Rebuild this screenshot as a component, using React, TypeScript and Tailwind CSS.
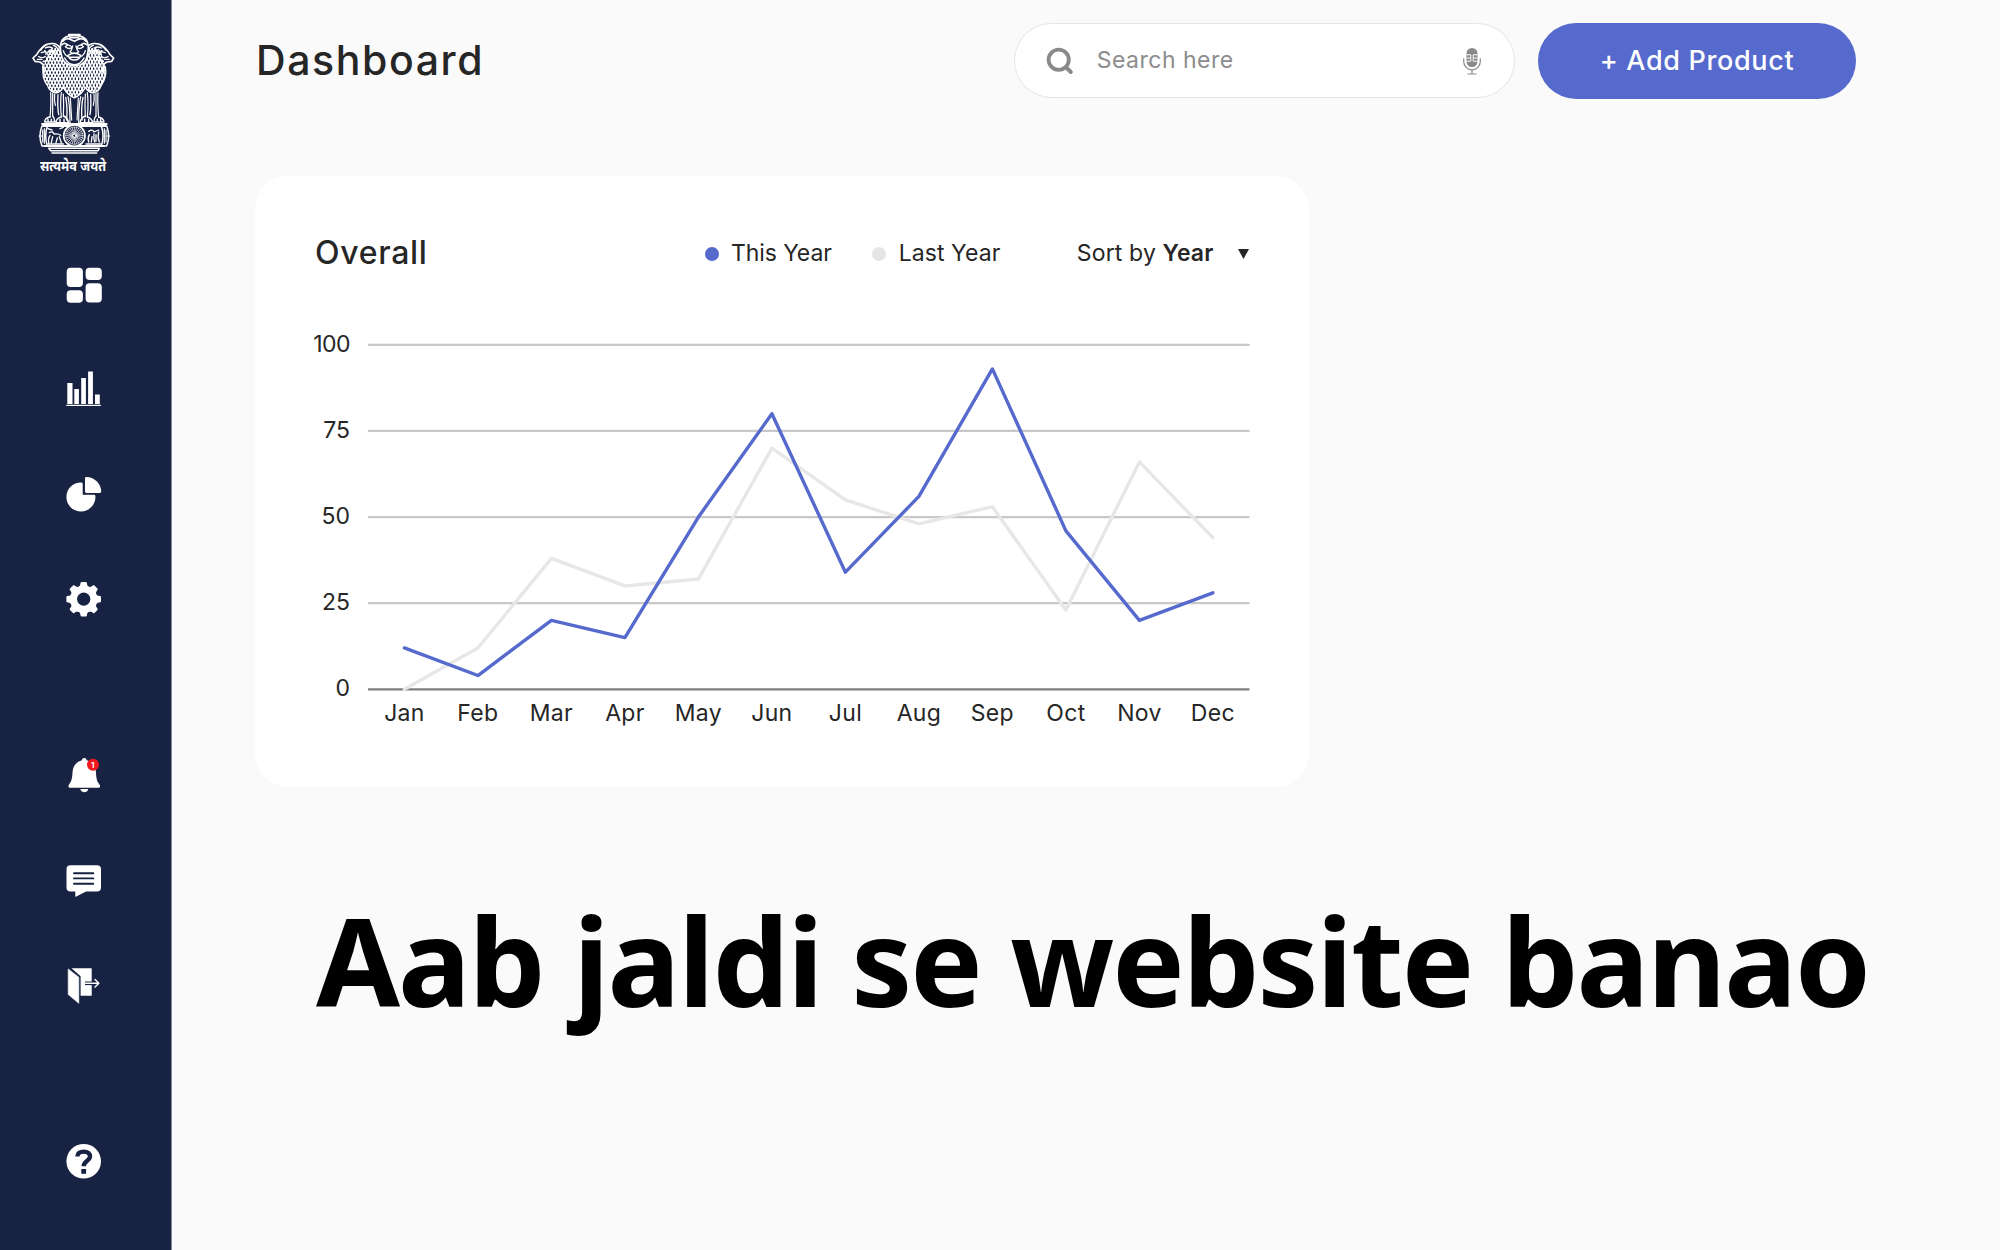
import React from "react";

const NAVY = "#182242";
const MONTHS = ["Jan", "Feb", "Mar", "Apr", "May", "Jun", "Jul", "Aug", "Sep", "Oct", "Nov", "Dec"];
const THIS_YEAR = [12, 4, 20, 15, 50, 80, 34, 56, 93, 46, 20, 28];
const LAST_YEAR = [0, 12, 38, 30, 32, 70, 55, 48, 53, 23, 66, 44];

/* ---------- Emblem ---------- */

function ManeScales() {
  const rows: React.ReactNode[] = [];
  for (let r = 0; r < 15; r++) {
    for (let c = 0; c < 20; c++) {
      const x = 66 + c * 10 + (r % 2) * 5;
      const y = 84 + r * 10;
      const lean = x < 130 ? -2 : x > 196 ? 2 : 0;
      rows.push(<path key={`${r}-${c}`} d={`M${x} ${y}q${1 + lean} 9 5 11q4 -3 5 -11`} />);
    }
  }
  return <g>{rows}</g>;
}

function SideLion() {
  return (
    <g>
      <path d="M120 84Q110 68 92 71Q76 72 66 84Q56 92 50 104L39 114L45 124L60 126L70 134Q66 146 74 156" strokeWidth="5" />
      <path d="M76 84Q86 78 98 84M64 98l12 -3M56 110q10 6 20 0M74 92q6 4 4 12M82 98q10 -8 18 2M84 112q10 -6 14 4M52 118h14M90 90q12 0 16 10M100 76q12 4 14 14" strokeWidth="4" />
      <path d="M62 90l6 -8 8 -6M70 124q10 2 12 -10" strokeWidth="5" />
    </g>
  );
}

function Emblem() {
  return (
    <svg width="90" height="125" viewBox="30 30 270 375" fill="none" stroke="#fff" strokeWidth="2.6" strokeLinecap="round" strokeLinejoin="round">
      <defs>
        <clipPath id="mane">
          <path d="M84 92Q100 76 124 90L132 128Q163 150 194 128L202 90Q226 76 242 92Q250 122 256 140Q262 170 244 196Q236 216 222 218Q206 220 196 202Q186 224 163 234Q140 224 130 202Q120 220 104 218Q90 216 82 196Q64 172 70 142Q78 122 84 92Z" />
        </clipPath>
      </defs>
      <g clipPath="url(#mane)" strokeWidth="4.200">
        <ManeScales />
      </g>
      <path d="M70 142Q64 172 82 196Q90 216 104 218Q120 220 130 202Q140 224 163 234Q186 224 196 202Q206 220 222 218Q236 216 244 196Q262 170 256 140" strokeWidth="4" />
      <SideLion />
      <g transform="matrix(-1 0 0 1 320 0)">
        <SideLion />
      </g>
      {/* centre lion */}
      <path d="M124 66Q118 84 124 104Q128 128 146 134Q164 140 182 134Q200 126 202 104Q208 84 202 66Q194 46 163 46Q132 46 124 66Z" fill={NAVY} strokeWidth="5" />
      <path d="M146 44h34M150 53h26M128 64q12 -12 22 -6l13 6l13 -6q12 -6 22 6M126 74q8 -8 16 0M184 74q8 -8 16 0" strokeWidth="5" />
      <path d="M136 80q10 -10 20 2q-8 8 -20 -2M170 82q10 -12 20 -2q-12 10 -20 2M158 78q-2 12 -8 18q13 8 26 0q-6 -6 -8 -18M130 92q4 14 14 18M196 92q-4 14 -14 18" strokeWidth="4" />
      <path d="M144 106q19 -12 38 0q-4 14 -19 14t-19 -14ZM150 112h26M134 114q10 20 29 20t29 -20" strokeWidth="4.500" />
      {/* legs */}
      <path d="M92 218Q94 250 90 292M98 220L98 288M124 218Q120 250 124 292M130 222Q132 256 130 290M144 230Q150 260 150 308M151 234L155 300M175 234L171 300M182 230Q176 260 176 308M196 222Q194 256 196 290M202 218Q206 250 202 292M228 220L228 288M234 218Q232 250 236 292M104 222Q102 240 106 256M222 222Q224 240 220 256" strokeWidth="3.600" />
      <path d="M137 232Q143 260 140 300M189 232Q183 260 186 300M114 224Q112 260 116 284M212 224Q214 260 210 284" strokeWidth="4" />
      {/* paws */}
      <path d="M90 290Q74 294 74 306H104Q104 294 98 288M124 290Q108 296 108 308H146Q142 294 132 288M196 288Q182 294 180 308H218Q216 296 202 290M228 288Q222 294 222 306H252Q250 294 236 292M84 298v8M94 298v8M120 298v8M132 298v8M194 298v8M206 298v8M232 298v8M242 298v8" strokeWidth="4.400" />
      {/* abacus */}
      <path d="M66 312H260M70 318H256M74 378H252" strokeWidth="5.500" strokeDasharray="5 2" />
      <path d="M66 318Q54 348 66 378H82Q72 348 82 318ZM260 318Q272 348 260 378H244Q254 348 244 318Z" strokeWidth="4.500" />
      <path d="M68 330v36M73 326v44M258 330v36M253 326v44M57 348h8M261 348h8" strokeWidth="3.500" />
      <circle cx="163" cy="347" r="32" fill={NAVY} strokeWidth="5" />
      <circle cx="163" cy="347" r="26" strokeWidth="1.5" />
      {Array.from({ length: 24 }, (_, i) => {
        const a = (i * Math.PI) / 12;
        return <path key={i} d={`M${163 + 6 * Math.cos(a)} ${347 + 6 * Math.sin(a)}L${163 + 26 * Math.cos(a)} ${347 + 26 * Math.sin(a)}`} strokeWidth="2.100" />;
      })}
      <circle cx="163" cy="347" r="5" strokeWidth="3" />
      <path d="M84 326l12 4M88 338q10 -6 14 4q14 -2 20 4M90 346q-6 8 -4 22M98 350l-4 18M118 350l6 18M112 354l-4 14M84 372h46M120 326l10 -4M206 334q12 -8 16 2l14 -6M208 344q-6 10 -2 22M222 342q-2 12 2 24M236 336q-4 16 2 30M198 372h44M216 350l-2 16M228 344v20" strokeWidth="4" />
      {/* base */}
      <path d="M86 385H238L234 392H92ZM96 399H230" strokeWidth="4.500" />
    </svg>
  );
}

/* ---------- Sidebar icons ---------- */

function Icon({ y, className, children }: { y: number; className: string; children: React.ReactNode }) {
  return (
    <svg className={className} width="38" height="38" viewBox={`65 ${y} 38 38`} fill="#fff">
      {children}
    </svg>
  );
}

function Sidebar() {
  return (
    <aside className="flex h-full w-[172px] shrink-0 flex-col border-r border-[#868b9b] bg-[#182242] pt-[30px]">
      <div className="ml-[30px] h-[125px]">
        <Emblem />
      </div>
      <div className="mt-px ml-[40px] h-[23px] w-[80px] origin-left scale-x-[0.87] font-['Noto_Sans_Devanagari','Noto_Sans','FreeSans',sans-serif] text-[14.5px] leading-[24px] font-bold whitespace-nowrap text-white">
        सत्यमेव जयते
      </div>
      <nav className="ml-[65px] flex flex-col">
        <Icon y={266} className="mt-[87px]">
          <rect x="66.7" y="267.7" width="16.2" height="19.2" rx="4" />
          <rect x="66.7" y="290.3" width="16.2" height="12.4" rx="4" />
          <rect x="85.6" y="267.7" width="16.2" height="12.4" rx="4" />
          <rect x="85.6" y="283.2" width="16.2" height="19.4" rx="4" />
        </Icon>
        <Icon y={370} className="mt-[66px]">
          <path d="M67.3 383h5.2v21h-5.200zM74.300 389h4.600v15h-4.600zM81.200 378h4.700v26h-4.700zM88.100 371.500h4.800v32.500h-4.800zM95 394.500h4.800v9.500h-4.800zM66.300 404.800h34.600v1.200h-34.600z" />
        </Icon>
        <Icon y={475} className="mt-[67px]">
          <path d="M81.3 482.5q1.4 0 1.4 1.4v10.9h11.3q1.4 0 1.4 1.4A14.5 14.5 0 1 1 81.3 482.5Z" />
          <path d="M86.3 477A15 15 0 0 1 101.2 491.600q0 1.400-1.400 1.400H86.400q-1.400 0-1.400-1.400V478.300q0-1.300 1.300-1.300Z" />
        </Icon>
        <Icon y={580} className="mt-[67px]">
          <circle cx="83.7" cy="599.2" r="13" />
          {[0, 45, 90, 135, 180, 225, 270, 315].map((a) => (
            <path key={a} transform={`rotate(${a} 83.7 599.2)`} stroke="#fff" strokeWidth="2" strokeLinejoin="round" d="M78.4 588.2L80.900 586L81.600 582.900H85.800L86.500 586L89 588.200Z" />
          ))}
          <circle cx="83.700" cy="599.200" r="6.600" fill={NAVY} />
        </Icon>
        <Icon y={756} className="mt-[138px]">
          <path d="M84.300 758q2.200 0 2.500 2.300Q95.800 763 96 772.500Q96 781 99.500 784.500Q101 787.700 98.500 787.700H70Q67.500 787.700 69 784.500Q72.300 781 72.500 772.500Q72.800 763 81.800 760.300Q82.100 758 84.300 758Z" />
          <path d="M80.300 789h8q-1 3.300-4 3.300t-4-3.300Z" />
          <circle cx="93" cy="764.700" r="6" fill="#f3191f" />
          <text x="92.800" y="767.800" fontSize="8" fontWeight="700" textAnchor="middle" fontFamily="Inter, sans-serif">1</text>
        </Icon>
        <Icon y={862} className="mt-[68px]">
          <path d="M70.500 865.300H97q4 0 4 4V887.500q0 4-4 4H86L75.300 897V891.500H70.500q-4 0-4-4V869.300q0-4 4-4Z" />
          <path d="M74 873.200H93.300M74 878.400H93.300M74 883.700H93.300" stroke={NAVY} strokeWidth="1.900" strokeLinecap="round" />
        </Icon>
        <Icon y={967} className="mt-[67px]">
          <path d="M71.500 968.300H91.700V995.700H80.600V976.200Z" />
          <path d="M68.200 969L78.800 977.200V1003.300L68.200 994.500Z" strokeLinejoin="round" stroke="#fff" strokeWidth=".6" />
          <path d="M85 983.300H92" stroke={NAVY} strokeWidth="3.600" />
          <path d="M85.500 983.300H98.500M95 979.500L98.900 983.300L95 987.100" fill="none" stroke="#fff" strokeWidth="1.400" strokeLinecap="round" strokeLinejoin="round" />
        </Icon>
        <Icon y={1142} className="mt-[137px]">
          <circle cx="83.700" cy="1161.300" r="17.300" />
          <path d="M77.400 1156.500C77.400 1153.300 80 1151.600 83.700 1151.600C87.800 1151.600 90 1153.700 90 1156.500C90 1161 83.700 1160.500 83.700 1166.300" fill="none" stroke={NAVY} strokeWidth="4.400" />
          <rect x="81.300" y="1169" width="4.800" height="4.800" fill={NAVY} />
        </Icon>
      </nav>
    </aside>
  );
}

/* ---------- Header ---------- */

function Header() {
  return (
    <header className="flex h-[75.4px] w-[1601.7px] items-center">
      <h1 className="w-[758.7px] pb-[1px] pl-[1px] text-[41px] leading-none font-medium tracking-[1.6px] text-[#262626]">Dashboard</h1>
      <div className="flex h-[75px] w-[501px] items-center rounded-full border-[1.5px] border-[#e5e5e5] bg-white pl-[31px]">
        <svg width="28" height="28" viewBox="0 0 28 28" fill="none" stroke="#898989">
          <circle cx="12.700" cy="12.800" r="10.100" strokeWidth="3.800" />
          <path d="M20.500 20.800L24.800 25" strokeWidth="4" strokeLinecap="round" />
        </svg>
        <span className="ml-[23px] w-[365px] pb-[1px] text-[23px] leading-none tracking-[0.5px] text-[#8c8c8c]">Search here</span>
        <svg width="20" height="28" viewBox="0 0 20 28" fill="none" stroke="#898989">
          <path d="M4.500 6.500a5.500 5.500 0 0 1 11 0V14.500a5.500 5.500 0 0 1-11 0Z" fill="#898989" stroke="none" />
          <path d="M4.500 7.800h4M11.500 7.800h4M4.500 11h4M11.500 11h4M4.500 14.200h4M11.500 14.200h4M8.800 7.500v7M11.200 7.500v7" stroke="#fff" strokeWidth="1" />
          <path d="M1.700 11.500v3a8.300 8.300 0 0 0 16.600 0v-3M10 22.800v4M5.500 27h9" strokeWidth="1.200" />
        </svg>
      </div>
      <button className="ml-[23px] flex h-full w-[318.700px] items-center justify-center rounded-full bg-[#566acd] text-[27px] leading-none font-medium tracking-[0.650px] text-white">
        + Add Product
      </button>
    </header>
  );
}

/* ---------- Chart ---------- */

const px = (i: number) => 89.400 + i * 73.500;
const py = (v: number) => 359.300 - v * 3.445;
const line = (d: number[]) => d.map((v, i) => `${px(i)},${py(v)}`).join(" ");

function Chart() {
  return (
    <svg width="940" height="405" viewBox="0 0 940 405" className="overflow-visible font-['Inter',sans-serif] text-[23px]" fill="#262626">
      {[100, 75, 50, 25, 0].map((v) => (
        <g key={v}>
          <text x="35" y={py(v) + 7} textAnchor="end" letterSpacing={v === 100 ? "-0.500" : "0"}>{v}</text>
          <path d={`M53 ${py(v)}H934.500`} stroke={v === 0 ? "#7f7f7f" : "#c8c8c8"} strokeWidth="2.300" />
        </g>
      ))}
      <polyline points={line(LAST_YEAR)} fill="none" stroke="#e7e7e7" strokeWidth="3.400" strokeLinecap="round" strokeLinejoin="round" />
      <polyline points={line(THIS_YEAR)} fill="none" stroke="#566acd" strokeWidth="3.400" strokeLinecap="round" strokeLinejoin="round" />
      {MONTHS.map((m, i) => (
        <text key={m} x={px(i)} y="391.300" textAnchor="middle" letterSpacing="0.300">{m}</text>
      ))}
    </svg>
  );
}

function OverallCard() {
  return (
    <section className="mt-[77px] h-[611.300px] w-[1054px] rounded-[34px] bg-white pt-[52px] pl-[60px]">
      <div className="flex h-[50px] items-center text-[23px] leading-none whitespace-nowrap text-[#262626]">
        <h2 className="w-[390px] text-[32px] leading-none font-medium tracking-[0.700px]">Overall</h2>
        <i className="mt-[2px] size-[14px] rounded-full bg-[#566acd]" />
        <span className="mt-[2px] ml-[12px] w-[141.300px] tracking-[-0.100px]">This Year</span>
        <i className="mt-[2px] size-[14px] rounded-full bg-[#e5e5e5]" />
        <span className="mt-[2px] ml-[12.500px] w-[178px] tracking-[0.050px]">Last Year</span>
        <span className="mt-[2px] w-[161.500px] tracking-[0.150px]">
          Sort by <b className="font-semibold">Year</b>
        </span>
        <svg width="11" height="10" viewBox="0 0 11 10" className="mt-[2px]">
          <path d="M0 0H11L5.500 10Z" fill="#262626" />
        </svg>
      </div>
      <div className="mt-[52.300px]">
        <Chart />
      </div>
    </section>
  );
}

export default function App() {
  return (
    <div className="flex h-[1250px] w-[2000px] overflow-hidden bg-[#fafafa] font-['Inter',sans-serif]">
      <Sidebar />
      <main className="pt-[23.300px] pl-[83px]">
        <Header />
        <OverallCard />
        <p className="mt-[103px] ml-[61px] font-['Noto_Sans',sans-serif] text-[121.500px] leading-[140px] font-bold tracking-[-2px] whitespace-nowrap text-black">
          Aab jaldi se website banao
        </p>
      </main>
    </div>
  );
}
